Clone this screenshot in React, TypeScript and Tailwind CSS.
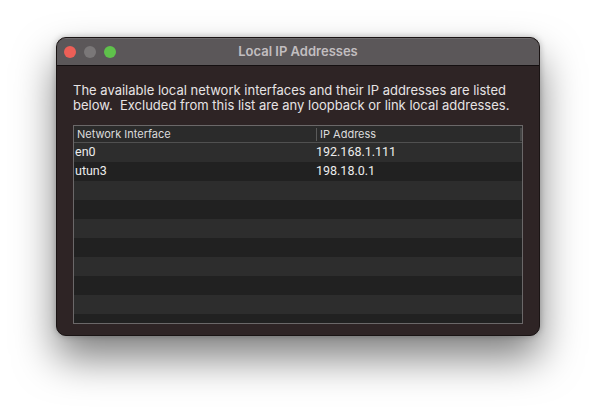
import React from "react";

const rows: [string, string][] = [
  ["en0", "192.168.1.111"],
  ["utun3", "198.18.0.1"],
  ["", ""],
  ["", ""],
  ["", ""],
  ["", ""],
  ["", ""],
  ["", ""],
  ["", ""],
  ["", ""],
];

export default function App() {
  return (
    <div
      className="w-[596px] h-[410px] bg-white overflow-hidden pt-[37px] pl-[56px]"
      style={{ fontFamily: 'Inter, "Liberation Sans", Arial, sans-serif' }}
    >
      <div className="w-[484px] h-[299px] rounded-[10px] border border-[#1a1414] bg-[#2e2425] overflow-hidden flex flex-col shadow-[0_22px_40px_rgba(0,0,0,0.5),0_0_6px_rgba(0,0,0,0.25)]">
        <div className="h-[28px] shrink-0 bg-[#5b5759] border-b border-[#140f10] relative flex items-center justify-center shadow-[inset_0_1px_0_rgba(255,255,255,0.12)]">
          <div className="absolute left-[7px] top-[8px] flex gap-[8px]">
            <div className="w-[12px] h-[12px] rounded-full bg-[#ec5f57]" />
            <div className="w-[12px] h-[12px] rounded-full bg-[#7a7778]" />
            <div className="w-[12px] h-[12px] rounded-full bg-[#5fc14b]" />
          </div>
          <span className="text-[13px] font-semibold text-[#c2bec0]">Local IP Addresses</span>
        </div>
        <div className="flex-1 flex flex-col px-[16px] pt-[17px] pb-[11px] min-h-0">
          <p className="text-[13px] leading-[15px] text-[#e6e3e4] whitespace-nowrap">
            The available local network interfaces and their IP addresses are listed
            <br />
            below.&nbsp; Excluded from this list are any loopback or link local addresses.
          </p>
          <div className="mt-[12px] flex-1 min-h-0 border border-[#6b6869] bg-[#212121] overflow-hidden flex flex-col">
            <div className="h-[17px] shrink-0 bg-[#2b2b2b] border-b border-[#505050] flex items-center text-[11px] text-[#dcdcdc] relative">
              <div className="w-[242px] pl-[3px] h-full flex items-center">Network Interface</div>
              <div className="h-[13px] w-px bg-[#5a5a5a]" />
              <div className="pl-[3px]">IP Address</div>
              <div className="absolute right-[0px] top-[2px] h-[13px] w-[2px] bg-[#444]" />
            </div>
            {rows.map((r, i) => (
              <div
                key={i}
                className={`h-[19px] shrink-0 flex items-center text-[12.5px] text-[#ececec] font-[Roboto,Inter,sans-serif] ${i % 2 === 0 ? "bg-[#2d2d2d]" : "bg-[#212121]"}`}
              >
                <div className="w-[242px] pl-[1px]">{r[0]}</div>
                <div>{r[1]}</div>
              </div>
            ))}
          </div>
        </div>
      </div>
    </div>
  );
}
